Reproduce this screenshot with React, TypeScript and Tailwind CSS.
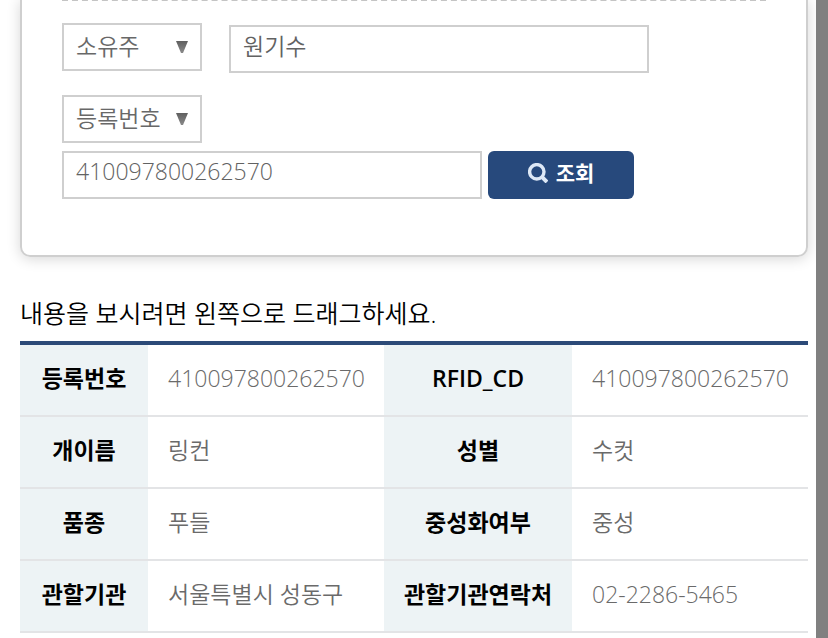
import type { ReactNode } from 'react';

const rows = [
  ['등록번호', '410097800262570', 'RFID_CD', '410097800262570'],
  ['개이름', '링컨', '성별', '수컷'],
  ['품종', '푸들', '중성화여부', '중성'],
  ['관할기관', '서울특별시 성동구', '관할기관연락처', '02-2286-5465'],
];

const inputClass =
  'h-12 w-full max-w-[420px] min-w-0 rounded-none border-2 border-[#cfcfcf] bg-white px-3 pb-2 text-[#626262] outline-none';

const headClass = 'border-b-2 border-[#e3e4e6] bg-[#edf3f5] pb-1 text-center font-semibold text-black';
const cellClass = 'border-b-2 border-[#e3e4e6] px-5 pb-1 text-[#6a6a6a]';

function SelectBox({ label, children }: { label: string; children: ReactNode }) {
  return (
    <div className="relative h-12 w-[140px] shrink-0">
      <select
        aria-label={label}
        className="h-full w-full appearance-none rounded-none border-2 border-[#cfcfcf] bg-white pr-8 pb-0.5 pl-3 text-[#686868] outline-none"
      >
        {children}
      </select>
      <svg viewBox="0 0 12 12" className="pointer-events-none absolute top-[18px] right-[14px] h-3 w-3">
        <defs>
          <linearGradient id="arrow" x1="0" y1="0" x2="0" y2="1">
            <stop offset="0" stopColor="#5f5f5f" />
            <stop offset="1" stopColor="#8a8a8a" />
          </linearGradient>
        </defs>
        <path d="M0 0h12L7 12H5z" fill="url(#arrow)" />
      </svg>
    </div>
  );
}

function SearchIcon() {
  return (
    <svg viewBox="0 0 20 20" className="h-5 w-5" fill="none" stroke="#dde8f6">
      <circle cx="8.8" cy="8.8" r="7.2" strokeWidth="3.4" />
      <path d="M13.4 13.4l5.6 5.6" strokeWidth="4" />
    </svg>
  );
}

function SearchForm() {
  return (
    <form
      onSubmit={(e) => e.preventDefault()}
      className="rounded-b-[10px] border-2 border-t-0 border-[#cfcfcf] px-10 pb-14 shadow-[0_2px_14px_rgba(0,0,0,0.16)]"
    >
      <hr className="-mt-px border-t-2 border-dashed border-[#c4c4c4]" />
      <div className="mt-[22px] flex gap-[27px]">
        <SelectBox label="소유주 구분">
          <option>소유주</option>
        </SelectBox>
        <div className="flex-1 pt-0.5">
          <input aria-label="소유주" defaultValue="원기수" className={inputClass} />
        </div>
      </div>
      <div className="mt-[22px]">
        <SelectBox label="번호 구분">
          <option>등록번호</option>
        </SelectBox>
      </div>
      <div className="mt-2 flex gap-1.5">
        <input aria-label="등록번호" defaultValue="410097800262570" className={inputClass} />
        <button
          type="submit"
          className="flex h-12 w-[146px] shrink-0 items-center justify-center gap-2 rounded-md bg-[#27497c] pb-1 text-[21px] font-semibold text-white"
        >
          <SearchIcon />
          조회
        </button>
      </div>
    </form>
  );
}

function DogTable() {
  return (
    <table className="w-full table-fixed border-separate border-spacing-0 border-t-4 border-[#2c4a78]">
      <colgroup>
        <col className="w-[128px]" />
        <col />
        <col className="w-[188px]" />
        <col />
      </colgroup>
      <tbody>
        {rows.map(([head1, value1, head2, value2]) => (
          <tr key={head1} className="h-[72px]">
            <th scope="row" className={headClass}>
              {head1}
            </th>
            <td className={cellClass}>{value1}</td>
            <th scope="row" className={headClass}>
              {head2}
            </th>
            <td className={cellClass}>{value2}</td>
          </tr>
        ))}
      </tbody>
    </table>
  );
}

export default function App() {
  return (
    <div className="min-h-screen overflow-hidden border-r-[12px] border-[#808080] bg-white pr-2 pl-5 font-['Open_Sans','Noto_Sans_CJK_KR',sans-serif] text-[23px] leading-8 font-[350]">
      <SearchForm />
      <p className="mt-10 mb-3 text-[25px] text-black">내용을 보시려면 왼쪽으로 드래그하세요.</p>
      <DogTable />
    </div>
  );
}
